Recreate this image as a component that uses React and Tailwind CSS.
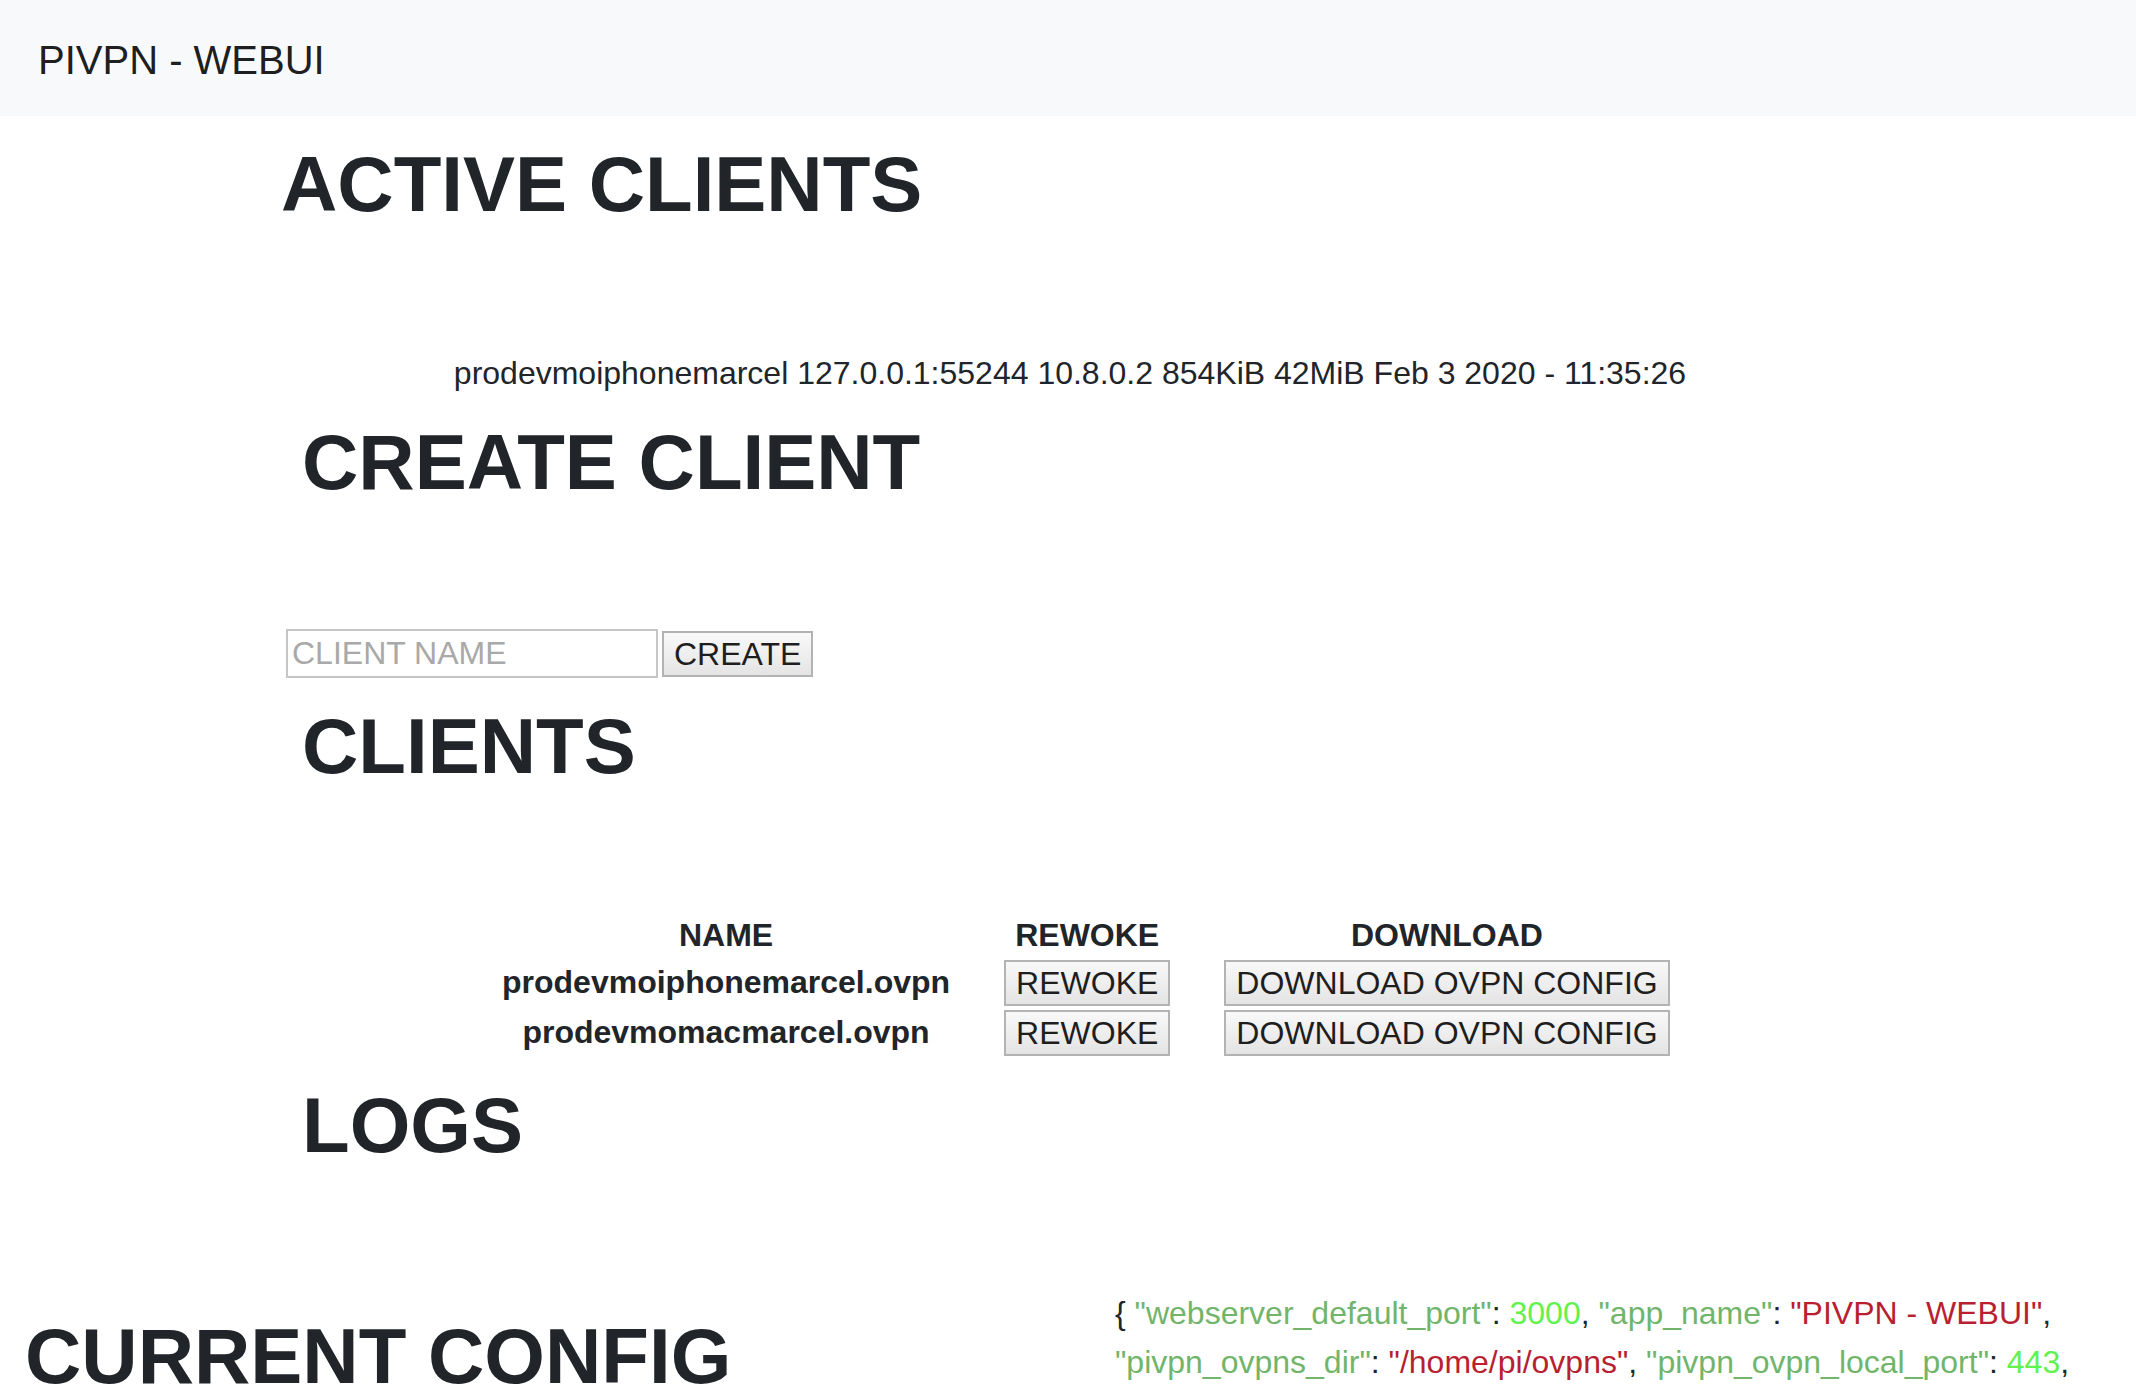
import React from 'react'

const clients = ['prodevmoiphonemarcel.ovpn', 'prodevmomacmarcel.ovpn']

const styles = {
  page: `min-h-screen bg-white text-[#212529] font-['Liberation_Sans',Arial,sans-serif]`,
  nav: `h-[116px] bg-[#f8f9fa] flex items-center pl-[38px] pt-[4px] text-[40px] text-black/90`,
  heading: `text-[78px] font-bold leading-[1.2] text-[#212529]`,
  btn: `h-[46px] px-[10px] border-2 border-[#b3b3b3] bg-gradient-to-b from-[#f9f9f9] to-[#e4e4e4] text-[32px] leading-none text-[#1e1e1e]`,
  cell: `px-[27px] text-center align-top`,
  key: `text-[#71b56b]`,
  num: `text-[#62f24f]`,
  str: `text-[#b81f31]`,
}

const Key = ({ children }) => <span className={styles.key}>"{children}"</span>
const Str = ({ children }) => <span className={styles.str}>"{children}"</span>
const Num = ({ children }) => <span className={styles.num}>{children}</span>

export default function App() {
  return (
    <div className={styles.page}>
      <nav className={styles.nav}>PIVPN - WEBUI</nav>

      {/* active clients */}
      <section className="pl-[281px] pt-[22px]">
        <h1 className={styles.heading}>ACTIVE CLIENTS</h1>
      </section>
      <p className="mt-[117px] text-center text-[32px] leading-[48px] pl-[4px]">
        prodevmoiphonemarcel 127.0.0.1:55244 10.8.0.2 854KiB 42MiB Feb 3 2020 - 11:35:26
      </p>

      {/* create client */}
      <section className="pl-[302px] pt-[19px]">
        <h1 className={styles.heading}>CREATE CLIENT</h1>
      </section>
      <div className="mt-[120px] pl-[286px] flex items-center gap-[4px]">
        <input
          type="text"
          placeholder="CLIENT NAME"
          className="w-[372px] h-[49px] border-2 border-[#c6c6c6] px-[4px] text-[32px] outline-none placeholder:text-[#a9a9a9]"
        />
        <button className={styles.btn}>CREATE</button>
      </div>

      {/* clients */}
      <section className="pl-[302px] pt-[22px]">
        <h1 className={styles.heading}>CLIENTS</h1>
      </section>
      <div className="mt-[117px] pl-[475px]">
        <table className="text-[32px]">
          <thead>
            <tr className="h-[42px] font-bold">
              <th className={styles.cell}>NAME</th>
              <th className={styles.cell}>REWOKE</th>
              <th className={styles.cell}>DOWNLOAD</th>
            </tr>
          </thead>
          <tbody>
            {clients.map((c) => (
              <tr key={c} className="h-[50px]">
                <td className={`${styles.cell} font-bold leading-[46px]`}>{c}</td>
                <td className={styles.cell}>
                  <button className={styles.btn}>REWOKE</button>
                </td>
                <td className={styles.cell}>
                  <button className={styles.btn}>DOWNLOAD OVPN CONFIG</button>
                </td>
              </tr>
            ))}
          </tbody>
        </table>
      </div>

      {/* logs */}
      <section className="pl-[302px] pt-[20px]">
        <h1 className={styles.heading}>LOGS</h1>
      </section>

      {/* config */}
      <div className="mt-[117px] grid grid-cols-2">
        <div className="pl-[25px]">
          <h1 className={`${styles.heading} mt-[21px]`}>CURRENT CONFIG</h1>
        </div>
        <div className="pl-[47px] pr-[12px] text-[32px] leading-[49px]">
          <div className="whitespace-nowrap">
            {'{ '}<Key>webserver_default_port</Key>: <Num>3000</Num>, <Key>app_name</Key>: <Str>PIVPN - WEBUI</Str>,
          </div>
          <div className="whitespace-nowrap">
            <Key>pivpn_ovpns_dir</Key>: <Str>/home/pi/ovpns</Str>, <Key>pivpn_ovpn_local_port</Key>: <Num>443</Num>,
          </div>
        </div>
      </div>
    </div>
  )
}
